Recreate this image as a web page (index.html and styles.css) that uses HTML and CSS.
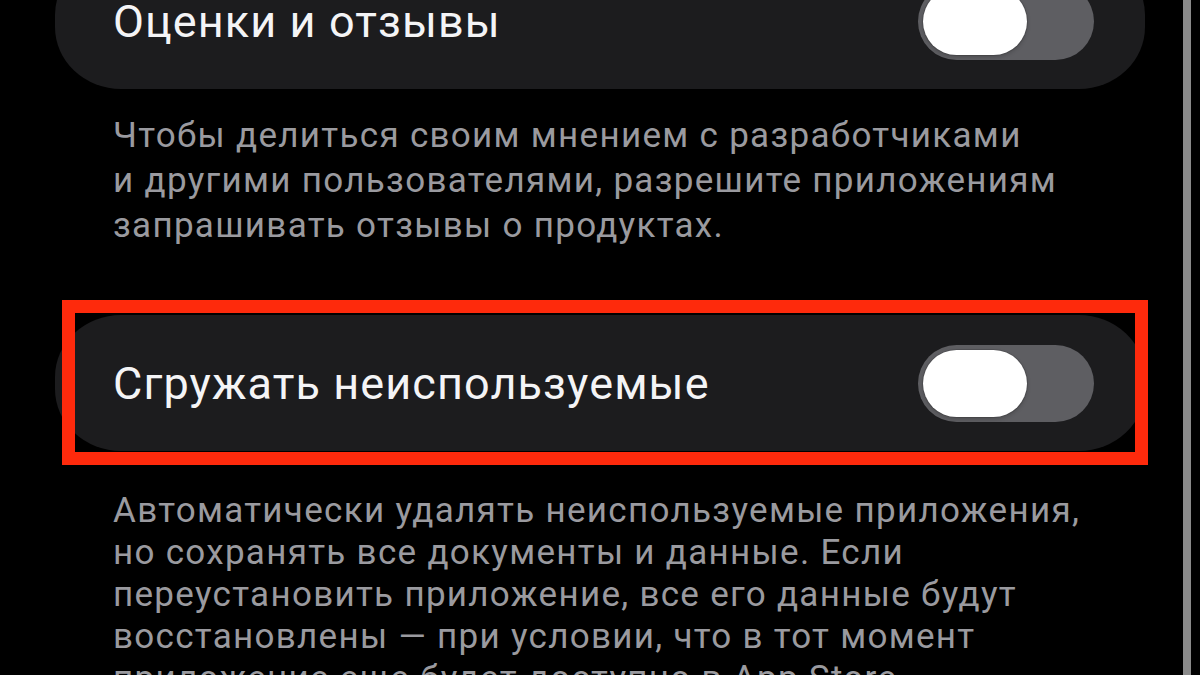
FILE: index.html
```html
<!DOCTYPE html>
<html lang="ru">
<head>
<meta charset="utf-8">
<title>Настройки</title>
<link rel="stylesheet" href="styles.css">
</head>
<body>
<div class="screen">
  <main class="list">
    <div class="row row-first">
      <span class="row-title">Оценки и отзывы</span>
      <span class="switch"><span class="knob"></span></span>
    </div>
    <p class="footnote">Чтобы делиться своим мнением с разработчиками<br>и другими пользователями, разрешите приложениям<br>запрашивать отзывы о продуктах.</p>

    <div class="highlight">
      <div class="row">
        <span class="row-title">Сгружать неиспользуемые</span>
        <span class="switch"><span class="knob"></span></span>
      </div>
    </div>
    <p class="footnote footnote-second">Автоматически удалять неиспользуемые приложения,<br>но сохранять все документы и данные. Если<br>переустановить приложение, все его данные будут<br>восстановлены — при условии, что в тот момент<br>приложение еще будет доступно в App Store.</p>
  </main>
  <div class="edge"></div>
</div>
</body>
</html>
```

FILE: styles.css
```css
html, body {
  margin: 0;
  padding: 0;
  background: #000;
}

body {
  width: 1200px;
  height: 675px;
  overflow: hidden;
  font-family: Roboto, "Noto Sans", "Liberation Sans", sans-serif;
  -webkit-font-smoothing: antialiased;
}

.screen {
  display: flex;
  align-items: stretch;
  height: 675px;
}

.list {
  width: 1090px;
  margin-left: 55px;
  margin-top: -47px;
}

.edge {
  width: 8px;
  margin-left: 38px;
  background: #8a8a8a;
}

.row {
  display: flex;
  align-items: center;
  justify-content: space-between;
  height: 136px;
  box-sizing: border-box;
  padding: 0 51px 0 58px;
  background: #1c1c1e;
  border-radius: 66px / 62px;
}

.row-title {
  color: #f4f4f6;
  font-size: 45px;
  letter-spacing: 1.1px;
  line-height: 1;
}

.switch {
  display: flex;
  align-items: center;
  width: 176px;
  height: 77px;
  box-sizing: border-box;
  padding: 5px;
  border-radius: 39px;
  background: #5e5e62;
}

.knob {
  width: 104px;
  height: 67px;
  border-radius: 34px;
  background: #fff;
  box-shadow: 0 0 0 1px rgba(0, 0, 0, 0.12), 0 2px 4px rgba(0, 0, 0, 0.2);
}

.footnote {
  margin: 24px 0 0;
  padding-left: 58px;
  color: #9a9a9f;
  font-size: 35px;
  line-height: 45px;
  letter-spacing: 1.3px;
}

.highlight {
  position: relative;
  margin-top: 67px;
}

.highlight::after {
  content: "";
  position: absolute;
  top: -15px;
  left: 7px;
  right: -3px;
  bottom: -14px;
  border: 13px solid #fe2a0c;
  pointer-events: none;
}

.footnote-second {
  margin-top: 39px;
  line-height: 42px;
}
```
